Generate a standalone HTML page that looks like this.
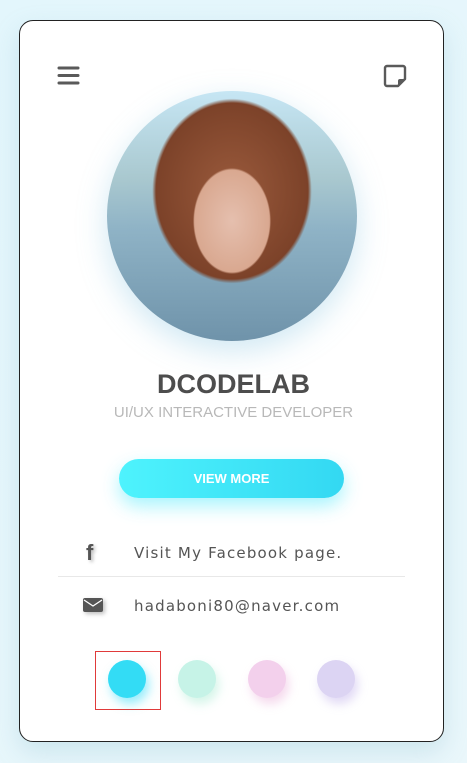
<!DOCTYPE html>
<html><head><style>
body{margin:0;width:467px;height:763px;background:linear-gradient(135deg,#e3f6fc,#eaf7fb);font-family:"Liberation Sans",sans-serif;position:relative;overflow:hidden}
.card{position:absolute;left:19px;top:20px;width:423px;height:720px;background:#fff;border:1px solid #222;border-radius:14px;box-shadow:0 10px 25px rgba(120,180,200,.25)}
.abs{position:absolute}
.photo{left:107px;top:91px;width:250px;height:250px;border-radius:50%;overflow:hidden;box-shadow:0 10px 30px rgba(120,190,220,.35);
background:radial-gradient(ellipse 50px 68px at 50% 52%,#e5bfae 0,#d9a890 75%,transparent 78%),radial-gradient(ellipse 95px 110px at 50% 40%,#9a5a3c 0,#7c4229 80%,transparent 84%),linear-gradient(180deg,#c6e6f4 0,#a9c8cf 35%,#8fb3c6 55%,#6f93aa 100%)}
.title{left:0;width:467px;text-align:center;top:369px;font-size:27px;font-weight:bold;color:#4d4d4d}
.sub{left:0;width:467px;text-align:center;top:404px;font-size:15px;color:#b8b8b8}
.btn{left:119px;top:459px;width:225px;height:39px;border-radius:20px;background:linear-gradient(90deg,#4ef3fd,#33d8f2);box-shadow:0 8px 18px rgba(60,230,250,.45);color:#fff;font-weight:bold;font-size:13px;text-align:center;line-height:39px}
.row{font-family:"DejaVu Sans",sans-serif;font-size:15px;color:#555;letter-spacing:1.2px}
.dot{width:38px;height:38px;border-radius:50%;top:660px}
</style></head><body>
<div class="card"></div>
<svg class="abs" style="left:57px;top:66px" width="23" height="20"><g stroke="#5a5a5a" stroke-width="3" stroke-linecap="round"><line x1="2" y1="2" x2="21" y2="2"/><line x1="2" y1="9.5" x2="21" y2="9.5"/><line x1="2" y1="17" x2="21" y2="17"/></g></svg>
<svg class="abs" style="left:383px;top:64px" width="24" height="24"><path d="M4 2h16a2 2 0 0 1 2 2v11l-7 7H4a2 2 0 0 1-2-2V4a2 2 0 0 1 2-2z" fill="none" stroke="#5a5a5a" stroke-width="2.4" stroke-linejoin="round"/><path d="M15 22v-5a2 2 0 0 1 2-2h5z" fill="#5a5a5a"/></svg>
<div class="abs photo"></div>
<div class="abs title">DCODELAB</div>
<div class="abs sub">UI/UX INTERACTIVE DEVELOPER</div>
<div class="abs btn">VIEW MORE</div>
<div class="abs" style="left:86px;top:540px;font:bold 22px 'Liberation Sans';color:#555;text-shadow:2px 2px 3px rgba(0,0,0,.25)">f</div>
<div class="abs row" style="left:134px;top:544px">Visit My Facebook page.</div>
<div class="abs" style="left:58px;top:576px;width:347px;height:1px;background:#e8e8e8"></div>
<svg class="abs" style="left:83px;top:598px;filter:drop-shadow(2px 2px 2px rgba(0,0,0,.25))" width="20" height="14"><rect width="20" height="14" rx="2" fill="#555"/><path d="M1 2l9 6 9-6" fill="none" stroke="#fff" stroke-width="1.3"/></svg>
<div class="abs row" style="left:134px;top:597px">hadaboni80@naver.com</div>
<div class="abs" style="left:95px;top:651px;width:64px;height:57px;border:1px solid #e03a3a"></div>
<div class="abs dot" style="left:108px;background:#33dcf5;box-shadow:3px 6px 10px rgba(50,220,250,.5)"></div>
<div class="abs dot" style="left:178px;background:#c6f3e7;box-shadow:3px 6px 10px rgba(150,230,200,.4)"></div>
<div class="abs dot" style="left:248px;background:#f3d0ec;box-shadow:3px 6px 10px rgba(230,160,210,.4)"></div>
<div class="abs dot" style="left:317px;background:#dcd4f3;box-shadow:3px 6px 10px rgba(180,160,230,.4)"></div>
</body></html>
